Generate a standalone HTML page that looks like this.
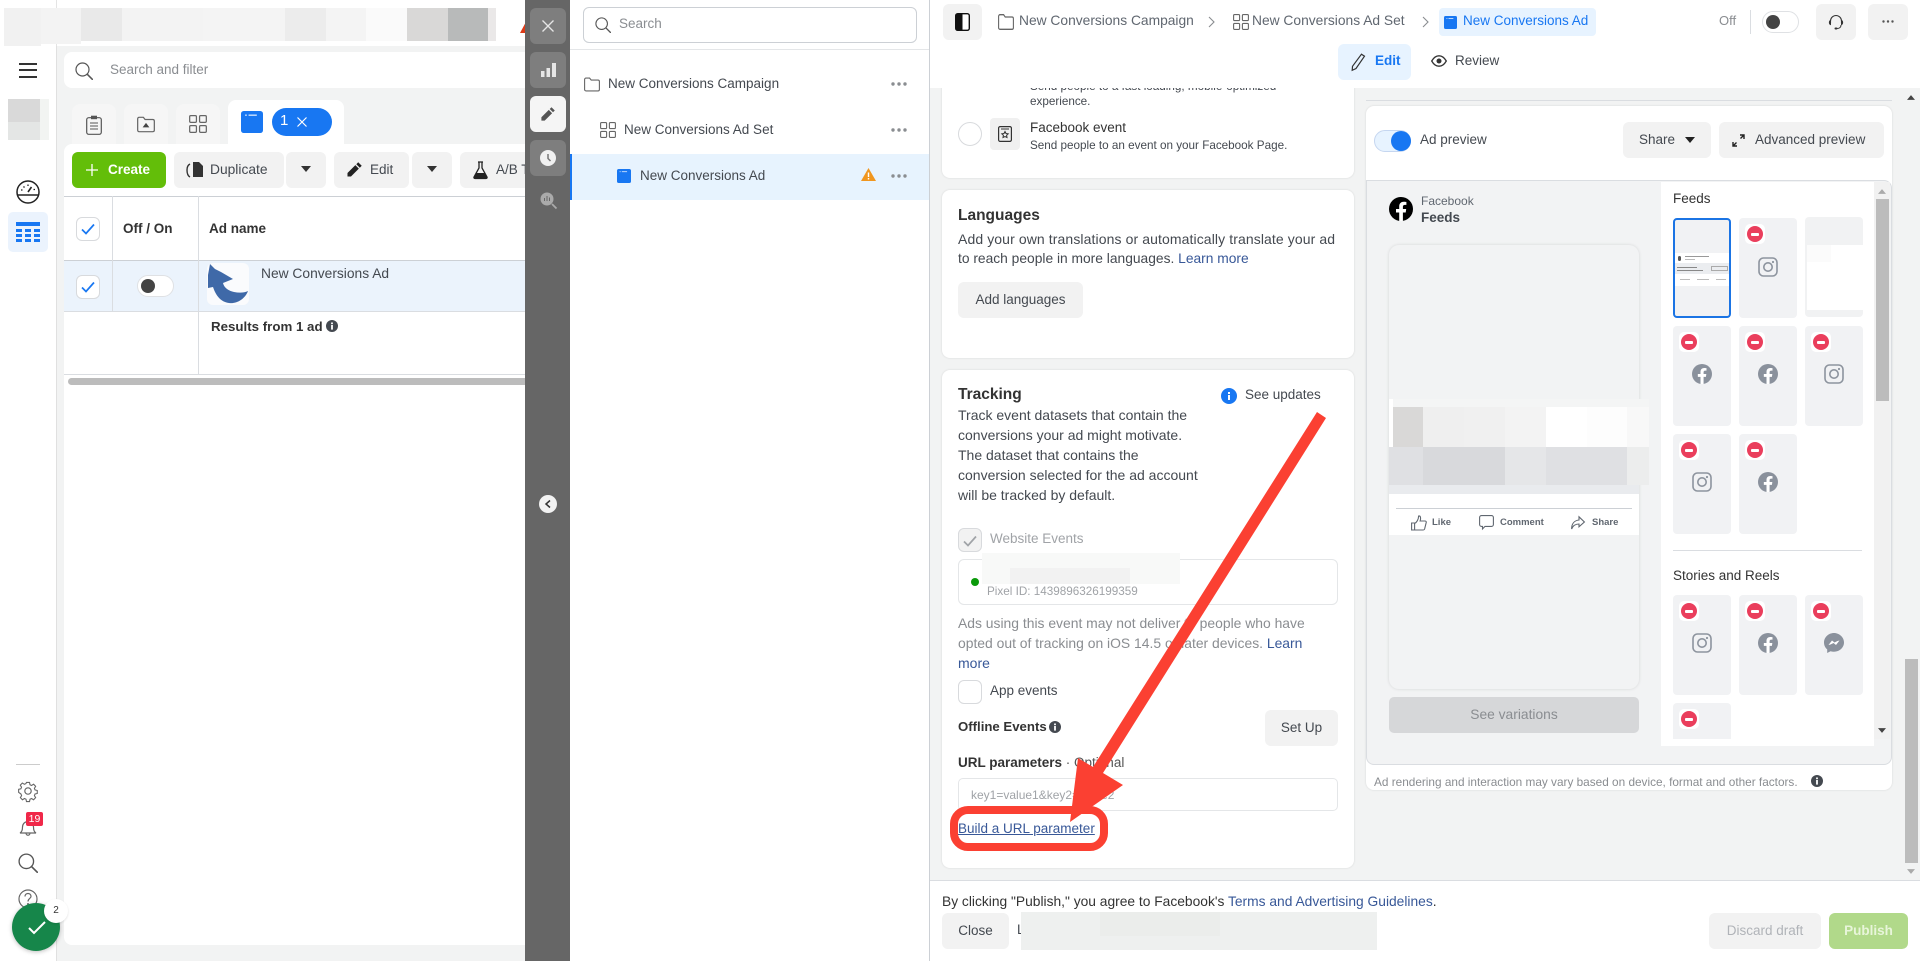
<!DOCTYPE html>
<html><head><meta charset="utf-8"><style>
*{box-sizing:border-box}
html,body{margin:0;padding:0;width:1920px;height:961px;overflow:hidden;background:#fff}
body{position:relative;font-family:"Liberation Sans",sans-serif;font-size:14px;color:#444950}
.a,.t{position:absolute}
.t{white-space:nowrap;line-height:20px;height:20px}
.b{font-weight:bold}
.btn{position:absolute;background:#f2f2f2;border-radius:6px}
.c{text-align:center}
svg{position:absolute;overflow:visible}
a{color:#385898;text-decoration:none}
.card{position:absolute;background:#fff;border-radius:8px;box-shadow:0 0 2px rgba(0,0,0,.12)}
.tile{position:absolute;width:58px;height:100px;background:#f1f2f4;border-radius:4px}
.st{position:absolute;left:6px;top:6px;width:20px;height:20px;background:#fff;border-radius:5px}
.st:after{content:"";position:absolute;left:2px;top:2px;width:16px;height:16px;border-radius:50%;background:#ea3e5c}
.st:before{content:"";position:absolute;z-index:1;left:6px;top:8.5px;width:8px;height:3px;background:#fff;border-radius:1px}
.chk{position:absolute;width:24px;height:24px;border:1px solid #d8dadd;border-radius:6px;background:#fff}
.tog{position:absolute;width:37px;height:22px;border:1px solid #dfe1e4;border-radius:11px;background:#fff}
.tog:after{content:"";position:absolute;left:3px;top:3px;width:14px;height:14px;border-radius:50%;background:#444}
.px{position:absolute}
.m{font-size:14px}
</style></head><body>
<svg width="0" height="0" style="position:absolute"><defs>
<symbol id="fb" viewBox="0 0 24 24"><circle cx="12" cy="12" r="12" fill="currentColor"/><path d="M16.7 15.5l.5-3.5h-3.3V9.8c0-1 .5-1.9 2-1.9h1.5V5s-1.4-.2-2.7-.2c-2.7 0-4.5 1.7-4.5 4.6V12H7v3.5h3.2V24h3.7v-8.5z" fill="#fff"/></symbol>
<symbol id="ig" viewBox="0 0 20 20"><g fill="none" stroke="#8d949e" stroke-width="1.6"><rect x="1" y="1" width="18" height="18" rx="4.5"/><circle cx="10" cy="10" r="4.2"/></g><circle cx="15" cy="5" r="1.1" fill="#8d949e"/></symbol>
<symbol id="ad" viewBox="0 0 16 16"><rect width="16" height="16" rx="2" fill="#1877f2"/><path d="M3 3h1.2M5.5 3h6" stroke="#cfe3fd" stroke-width="1"/></symbol>
<symbol id="grid" viewBox="0 0 16 16"><g fill="none" stroke="#666" stroke-width="1.1"><rect x=".6" y=".6" width="6" height="6" rx="1"/><rect x="9.4" y=".6" width="6" height="6" rx="1"/><rect x=".6" y="9.4" width="6" height="6" rx="1"/><rect x="9.4" y="9.4" width="6" height="6" rx="1"/></g></symbol>
<symbol id="folder" viewBox="0 0 16 14"><path d="M.6 12V2c0-.8.6-1.4 1.4-1.4h3.6l1.6 2H14c.8 0 1.4.6 1.4 1.4v8c0 .8-.6 1.4-1.400 1.400H2C1.200 13.400.6 12.800.6 12z" fill="none" stroke="#666" stroke-width="1.100"/></symbol>
<symbol id="mag" viewBox="0 0 18 18"><circle cx="7.500" cy="7.500" r="6.500" fill="none" stroke="#555" stroke-width="1.200"/><path d="M12.300 12.300l5 5" stroke="#555" stroke-width="1.500" stroke-linecap="round"/></symbol>
<symbol id="check" viewBox="0 0 14 12"><path d="M1 6.500l4 4 8-9" fill="none" stroke="#1877f2" stroke-width="1.700"/></symbol>
<symbol id="dots" viewBox="0 0 16 4"><circle cx="2" cy="2" r="1.700" fill="#8a8d91"/><circle cx="8" cy="2" r="1.700" fill="#8a8d91"/><circle cx="14" cy="2" r="1.700" fill="#8a8d91"/></symbol>
<symbol id="pen" viewBox="0 0 16 16"><path d="M11.500 1.200l3.300 3.300-1.800 1.800-3.300-3.300zM8.800 3.900l3.300 3.300-7.400 7.400H1.400v-3.300z" fill="currentColor"/></symbol>
<symbol id="info" viewBox="0 0 12 12"><circle cx="6" cy="6" r="6" fill="#444950"/><rect x="5.100" y="5" width="1.800" height="4.600" fill="#fff"/><rect x="5.100" y="2.500" width="1.800" height="1.700" fill="#fff"/></symbol>
<symbol id="tri" viewBox="0 0 10 6"><path d="M0 0h10L5 6z" fill="currentColor"/></symbol>
</defs></svg>

<!-- LEFT APP -->
<div class="a" style="left:56px;top:46px;width:474px;height:915px;background:#f2f3f3"></div>
<div class="a" style="left:56px;top:0;width:1px;height:46px;background:#e4e4e4"></div>
<div class="a" style="left:56px;top:46px;width:1px;height:915px;background:#e0e0e0"></div>

<!-- top blurred tiles -->
<div class="px" style="left:4px;top:8px;width:37px;height:38px;background:#f1f1f1"></div>
<div class="px" style="left:41px;top:8px;width:40px;height:36px;background:#f3f3f3"></div>
<div class="px" style="left:81px;top:8px;width:41px;height:33px;background:#e9e9e9"></div>
<div class="px" style="left:122px;top:8px;width:81px;height:33px;background:#f3f3f3"></div>
<div class="px" style="left:203px;top:8px;width:82px;height:33px;background:#f4f4f4"></div>
<div class="px" style="left:285px;top:8px;width:41px;height:33px;background:#ececec"></div>
<div class="px" style="left:326px;top:8px;width:40px;height:33px;background:#f4f4f4"></div>
<div class="px" style="left:366px;top:8px;width:41px;height:33px;background:#fafafa"></div>
<div class="px" style="left:407px;top:8px;width:41px;height:33px;background:#d9d8d7"></div>
<div class="px" style="left:448px;top:8px;width:40px;height:33px;background:#b8baba"></div>
<div class="px" style="left:488px;top:8px;width:8px;height:33px;background:#eae8e8"></div>
<svg style="left:520px;top:20px" width="10" height="14"><path d="M0 13L7 0h3v13z" fill="#dd3a17"/></svg>

<!-- sidebar -->
<div class="a" style="left:19px;top:63px;width:18px;height:2px;background:#333"></div>
<div class="a" style="left:19px;top:69px;width:18px;height:2px;background:#333"></div>
<div class="a" style="left:19px;top:76px;width:18px;height:2px;background:#333"></div>
<div class="px" style="left:8px;top:99px;width:32px;height:23px;background:#d9d9d9"></div>
<div class="px" style="left:8px;top:122px;width:32px;height:18px;background:#e4e6e5"></div>
<div class="px" style="left:40px;top:99px;width:9px;height:41px;background:#f2f4f2"></div>
<svg style="left:16px;top:180px" width="24" height="24" viewBox="0 0 24 24"><circle cx="12" cy="12" r="11" fill="none" stroke="#222" stroke-width="1.500"/><path d="M2 15h20" stroke="#222" stroke-width="1.500"/><path d="M12 12l3.500-5" stroke="#222" stroke-width="1.600"/><path d="M5 10h1.500M7.500 6.500l1 1M12 4.500v1.500M17.500 9.500H19" stroke="#222" stroke-width="1.300"/></svg>
<div class="a" style="left:8px;top:212px;width:40px;height:40px;background:#ebf3fd;border-radius:5px"></div>
<svg style="left:16px;top:222px" width="24" height="21" viewBox="0 0 24 21"><rect width="24" height="4" fill="#1877f2"/><path d="M0 7h6v3H0zM9 7h6v3H9zM18 7h6v3h-6zM0 12h6v3H0zM9 12h6v3H9zM18 12h6v3h-6zM0 17h6v3H0zM9 17h6v3H9zM18 17h6v3h-6z" fill="#1877f2"/></svg>
<div class="a" style="left:16px;top:764px;width:24px;height:1px;background:#ccc"></div>
<svg style="left:18px;top:781px" width="20" height="20" viewBox="0 0 20 20"><path d="M8.300 1h3.400l.5 2.600 1.700.8 2.300-1.400 2.300 2.400-1.400 2.200.7 1.800 2.500.6v3.300l-2.500.6-.7 1.800 1.400 2.200-2.300 2.400-2.300-1.400-1.700.8-.5 2.600H8.300l-.5-2.600-1.700-.8-2.300 1.400-2.300-2.400 1.400-2.200-.7-1.800L-.4 12V8.700l2.500-.6.7-1.800L1.400 4.100 3.700 1.700 6 3.100l1.700-.8z" transform="translate(1 .5) scale(.9)" fill="none" stroke="#666" stroke-width="1.200"/><circle cx="10" cy="10" r="3.200" fill="none" stroke="#666" stroke-width="1.200"/></svg>
<svg style="left:19px;top:819px" width="18" height="18" viewBox="0 0 18 18"><path d="M1 14c2-1 2.500-3 2.500-6a5.500 5.500 0 0 1 11 0c0 3 .5 5 2.500 6zM7 14c0 3 4 3 4 0" fill="none" stroke="#666" stroke-width="1.200"/></svg>
<div class="a c" style="left:26px;top:812px;width:17px;height:14px;background:#f02849;border-radius:2px;color:#fff;font-size:10.500px;line-height:14px">19</div>
<svg style="left:18px;top:853px" width="20" height="20"><use href="#mag" width="20" height="20"/></svg>
<svg style="left:18px;top:889px" width="20" height="20" viewBox="0 0 20 20"><circle cx="10" cy="10" r="9" fill="none" stroke="#666" stroke-width="1.200"/><path d="M7 7.500c0-4 6-4 6 0 0 2-3 2-3 5" fill="none" stroke="#666" stroke-width="1.200"/><circle cx="10" cy="15" r="1" fill="#666"/></svg>

<!-- search bar -->
<div class="a" style="left:64px;top:52px;width:480px;height:36px;background:#fff;border-radius:8px"></div>
<svg style="left:75px;top:62px" width="18" height="18"><use href="#mag" width="18" height="18"/></svg>
<div class="t" style="left:110px;top:60px;color:#8a8d91;font-size:13.500px">Search and filter</div>

<!-- tabs -->
<div class="a" style="left:72px;top:104px;width:44px;height:42px;background:#f6f6f6;border-radius:8px 8px 0 0"></div>
<div class="a" style="left:124px;top:104px;width:44px;height:42px;background:#f6f6f6;border-radius:8px 8px 0 0"></div>
<div class="a" style="left:176px;top:104px;width:44px;height:42px;background:#f6f6f6;border-radius:8px 8px 0 0"></div>
<svg style="left:86px;top:115px" width="16" height="20" viewBox="0 0 16 20"><rect x=".7" y="2.700" width="14.600" height="16.600" rx="2" fill="none" stroke="#555" stroke-width="1.200"/><rect x="5" y=".7" width="6" height="3.500" fill="#555"/><path d="M4 8h8M4 11h8M4 14h8" stroke="#555" stroke-width="1"/></svg>
<svg style="left:137px;top:116px" width="18" height="17" viewBox="0 0 16 14"><use href="#folder" width="16" height="14"/><path d="M8 5.500l3 4H5z" fill="#444"/></svg>
<svg style="left:189px;top:115px" width="18" height="18"><use href="#grid" width="18" height="18"/></svg>
<div class="a" style="left:228px;top:100px;width:116px;height:46px;background:#fff;border-radius:8px 8px 0 0"></div>
<svg style="left:241px;top:111px" width="22" height="22"><use href="#ad" width="22" height="22"/></svg>
<div class="a" style="left:272px;top:108px;width:60px;height:28px;background:#1877f2;border-radius:14px"></div>
<div class="t" style="left:280px;top:111px;color:#fff;font-size:15px">1</div>
<svg style="left:297px;top:117px" width="10" height="10"><path d="M.5.500l9 9M9.500.500l-9 9" stroke="#fff" stroke-width="1.200"/></svg>

<!-- panel -->
<div class="a" style="left:64px;top:144px;width:470px;height:801px;background:#fff;border-radius:8px"></div>
<div class="a" style="left:72px;top:152px;width:94px;height:36px;background:#63be09;border-radius:6px"></div>
<svg style="left:86px;top:164px" width="12" height="12"><path d="M6 0v12M0 6h12" stroke="#fff" stroke-width="1.300"/></svg>
<div class="t b" style="left:108px;top:160px;color:#fff;font-size:13.500px">Create</div>
<div class="btn" style="left:174px;top:152px;width:110px;height:36px"></div>
<div class="btn" style="left:286px;top:152px;width:40px;height:36px"></div>
<svg style="left:186px;top:161px" width="18" height="18" viewBox="0 0 18 18"><path d="M7 1h6l4 4v11H7z" fill="#333"/><path d="M4 3C2 4 1 6 1 9s1 6 3 7" fill="none" stroke="#333" stroke-width="1.400"/></svg>
<div class="t" style="left:210px;top:160px;font-size:13.800px">Duplicate</div>
<svg style="left:301px;top:166px" width="10" height="6" color="#333"><use href="#tri" width="10" height="6"/></svg>
<div class="btn" style="left:334px;top:152px;width:75px;height:36px"></div>
<div class="btn" style="left:412px;top:152px;width:40px;height:36px"></div>
<svg style="left:346px;top:161px;color:#222" width="17" height="17"><use href="#pen" width="17" height="17"/></svg>
<div class="t" style="left:370px;top:160px;font-size:13.500px">Edit</div>
<svg style="left:427px;top:166px" width="10" height="6" color="#333"><use href="#tri" width="10" height="6"/></svg>
<div class="btn" style="left:460px;top:152px;width:90px;height:36px"></div>
<svg style="left:473px;top:161px" width="15" height="18" viewBox="0 0 15 18"><path d="M5 1h5M6 1v6L1 16c-.3.600 0 1.500 1 1.500h11c1 0 1.300-.9 1-1.500L9 7V1" fill="none" stroke="#222" stroke-width="1.300"/><path d="M3 12h9l2 5H1z" fill="#222"/></svg>
<div class="t" style="left:496px;top:160px;font-size:13.500px">A/B Test</div>

<!-- table -->
<div class="a" style="left:64px;top:196px;width:470px;height:1px;background:#ccd0d5"></div>
<div class="a" style="left:64px;top:260px;width:470px;height:52px;background:#ebf3fc;border-top:1px solid #ccd0d5;border-bottom:1px solid #dadde1"></div>
<div class="a" style="left:112px;top:196px;width:1px;height:115px;background:#dadde1"></div>
<div class="a" style="left:198px;top:196px;width:1px;height:178px;background:#dadde1"></div>
<div class="a" style="left:64px;top:374px;width:470px;height:1px;background:#dadde1"></div>
<div class="a" style="left:68px;top:378px;width:460px;height:7px;background:#bcbcbc;border-radius:4px"></div>
<div class="chk" style="left:76px;top:217px"></div><svg style="left:81px;top:223px" width="14" height="12"><use href="#check" width="14" height="12"/></svg>
<div class="chk" style="left:76px;top:275px"></div><svg style="left:81px;top:281px" width="14" height="12"><use href="#check" width="14" height="12"/></svg>
<div class="t b" style="left:123px;top:219px;font-size:13.500px;color:#333">Off / On</div>
<div class="t b" style="left:209px;top:219px;font-size:13.500px;color:#333">Ad name</div>
<div class="tog" style="left:137px;top:275px"></div>
<div class="a" style="left:207px;top:263px;width:42px;height:42px;background:#fafbfd;border-radius:6px"></div>
<svg style="left:207px;top:263px" width="42" height="42" viewBox="0 0 42 42"><path d="M3 1L8 6L14 9L26 16L16 20C17 25 22 28 27 29C32 30 37 30 41 28C38 36 30 41 22 40C14 39 9 33 6 24L1 25L1 12Z" fill="#3f69a8"/></svg>
<div class="t" style="left:261px;top:264px;font-size:13.800px">New Conversions Ad</div>
<div class="t b" style="left:211px;top:317px;font-size:13.300px;color:#333">Results from 1 ad</div>
<svg style="left:326px;top:320px" width="12" height="12"><use href="#info" width="12" height="12"/></svg>

<!-- fab -->
<div class="a" style="left:12px;top:903px;width:48px;height:48px;border-radius:50%;background:#16864a;box-shadow:0 1px 4px rgba(0,0,0,.25)"></div>
<svg style="left:28px;top:921px" width="18" height="14"><path d="M1 7l5 5L17 1" fill="none" stroke="#fff" stroke-width="2"/></svg>
<div class="a c" style="left:44px;top:899px;width:24px;height:24px;border-radius:50%;background:#fff;font-size:10px;line-height:24px;color:#333;box-shadow:0 1px 2px rgba(0,0,0,.12)">2</div>

<!-- RAIL -->
<div class="a" style="left:525px;top:0;width:45px;height:961px;background:#666"></div>
<div class="a" style="left:530px;top:8px;width:36px;height:36px;background:#7e7e7e;border-radius:6px"></div>
<svg style="left:542px;top:20px" width="12" height="12"><path d="M.5.500l11 11M11.500.500l-11 11" stroke="#e6e6e6" stroke-width="1.300"/></svg>
<div class="a" style="left:530px;top:52px;width:36px;height:36px;background:#7e7e7e;border-radius:6px"></div>
<svg style="left:541px;top:62px" width="15" height="15"><path d="M0 9h3.500v6H0zM5.500 6H9v9H5.500zM11 1h4v14h-4z" fill="#e6e6e6"/></svg>
<div class="a" style="left:530px;top:96px;width:36px;height:36px;background:#f5f5f5;border-radius:6px"></div>
<svg style="left:540px;top:106px;color:#555" width="16" height="16"><use href="#pen" width="16" height="16"/></svg>
<div class="a" style="left:530px;top:140px;width:36px;height:36px;background:#7e7e7e;border-radius:6px"></div>
<svg style="left:540px;top:150px" width="16" height="16"><circle cx="8" cy="8" r="8" fill="#f0f0f0"/><path d="M8 4v4.500l2.500 2.500" fill="none" stroke="#777" stroke-width="1.500"/></svg>
<svg style="left:540px;top:192px" width="17" height="17" viewBox="0 0 17 17"><circle cx="7" cy="7" r="6.500" fill="#aaa"/><path d="M4.500 6v3M7 4v5M9.500 5.500V9" stroke="#666" stroke-width="1"/><path d="M12 12l4.500 4.500" stroke="#aaa" stroke-width="1.800"/></svg>
<div class="a" style="left:539px;top:495px;width:18px;height:18px;background:#f2f2f2;border-radius:50%"></div>
<svg style="left:545px;top:500px" width="6" height="8"><path d="M5 .500L1 4l4 3.500" fill="none" stroke="#333" stroke-width="1.500"/></svg>

<!-- NAV PANEL -->
<div class="a" style="left:570px;top:0;width:360px;height:961px;background:#fff;border-right:1px solid #ccd0d5"></div>
<div class="a" style="left:583px;top:7px;width:334px;height:36px;border:1px solid #ccd0d5;border-radius:6px;background:#fff"></div>
<svg style="left:595px;top:17px" width="16" height="16"><use href="#mag" width="16" height="16"/></svg>
<div class="t" style="left:619px;top:14px;color:#8a8d91;font-size:13.500px">Search</div>
<div class="a" style="left:570px;top:49px;width:359px;height:1px;background:#e4e6e8"></div>
<svg style="left:584px;top:77px" width="16" height="15"><use href="#folder" width="16" height="15"/></svg>
<div class="t" style="left:608px;top:74px;font-size:13.500px">New Conversions Campaign</div>
<svg style="left:891px;top:82px" width="16" height="4"><use href="#dots" width="16" height="4"/></svg>
<svg style="left:600px;top:122px" width="16" height="16"><use href="#grid" width="16" height="16"/></svg>
<div class="t" style="left:624px;top:120px;font-size:13.500px">New Conversions Ad Set</div>
<svg style="left:891px;top:128px" width="16" height="4"><use href="#dots" width="16" height="4"/></svg>
<div class="a" style="left:570px;top:154px;width:359px;height:46px;background:#e7f3fe;border-left:2px solid #1877f2"></div>
<svg style="left:617px;top:169px" width="14" height="14"><use href="#ad" width="14" height="14"/></svg>
<div class="t" style="left:640px;top:166px;font-size:13.500px">New Conversions Ad</div>
<svg style="left:861px;top:168px" width="15" height="13" viewBox="0 0 15 13"><path d="M7.500 0L15 13H0z" fill="#f0961f"/><rect x="6.800" y="4.500" width="1.400" height="4.500" fill="#fff"/><rect x="6.800" y="10" width="1.400" height="1.500" fill="#fff"/></svg>
<svg style="left:891px;top:174px" width="16" height="4"><use href="#dots" width="16" height="4"/></svg>

<!-- EDITOR -->
<div class="a" style="left:930px;top:88px;width:990px;height:792px;background:#f2f3f3"></div>

<!-- card 1 -->
<div class="card" style="left:942px;top:60px;width:412px;height:118px"></div>
<div class="t" style="left:1030px;top:77px;font-size:11.700px">Send people to a fast loading, mobile-optimized</div>
<div class="t" style="left:1030px;top:92px;font-size:11.700px">experience.</div>
<div class="a" style="left:958px;top:122px;width:24px;height:24px;border:1px solid #d8dadd;border-radius:50%;background:#fff"></div>
<div class="a" style="left:990px;top:118px;width:30px;height:32px;background:#f0f0f0;border-radius:4px"></div>
<svg style="left:998px;top:126px" width="14" height="16" viewBox="0 0 14 16"><rect x=".6" y=".6" width="12.800" height="14.800" rx="1.500" fill="none" stroke="#333" stroke-width="1.200"/><path d="M3 3h8" stroke="#333"/><path d="M7 5.500l1 2 2.200.3-1.600 1.500.4 2.200-2-1-2 1 .4-2.200-1.600-1.500 2.200-.3z" fill="none" stroke="#333"/></svg>
<div class="t" style="left:1030px;top:118px;font-size:13.500px;color:#333">Facebook event</div>
<div class="t" style="left:1030px;top:136px;font-size:11.700px">Send people to an event on your Facebook Page.</div>

<!-- languages -->
<div class="card" style="left:942px;top:190px;width:412px;height:168px"></div>
<div class="t b" style="left:958px;top:206px;font-size:15.500px;color:#333">Languages</div>
<div class="t" style="left:958px;top:229px;font-size:14px;letter-spacing:.1px">Add your own translations or automatically translate your ad</div>
<div class="t" style="left:958px;top:249px;font-size:13.800px">to reach people in more languages. <a>Learn more</a></div>
<div class="btn" style="left:958px;top:282px;width:125px;height:36px"></div>
<div class="t c" style="left:958px;top:290px;width:125px;font-size:13.500px">Add languages</div>

<!-- tracking -->
<div class="card" style="left:942px;top:370px;width:412px;height:498px"></div>
<div class="t b" style="left:958px;top:385px;font-size:15.500px;color:#333">Tracking</div>
<svg style="left:1221px;top:388px" width="16" height="16"><circle cx="8" cy="8" r="8" fill="#1877f2"/><rect x="7" y="7" width="2" height="5" fill="#fff"/><rect x="7" y="4" width="2" height="2" fill="#fff"/></svg>
<div class="t" style="left:1245px;top:385px;font-size:13.500px">See updates</div>
<div class="t m" style="left:958px;top:405px">Track event datasets that contain the</div>
<div class="t m" style="left:958px;top:425px">conversions your ad might motivate.</div>
<div class="t m" style="left:958px;top:445px">The dataset that contains the</div>
<div class="t m" style="left:958px;top:465px">conversion selected for the ad account</div>
<div class="t m" style="left:958px;top:485px">will be tracked by default.</div>
<div class="chk" style="left:958px;top:528px;background:#f2f2f2"></div>
<svg style="left:963px;top:535px" width="14" height="12" viewBox="0 0 14 12"><path d="M1 6.500l4 4 8-9" fill="none" stroke="#a0a3a7" stroke-width="1.700"/></svg>
<div class="t" style="left:990px;top:529px;font-size:13.500px;color:#a0a3a7">Website Events</div>
<div class="a" style="left:958px;top:559px;width:380px;height:46px;border:1px solid #e4e6e8;border-radius:6px;background:#fff"></div>
<div class="px" style="left:982px;top:553px;width:198px;height:31px;background:#f8f9f8"></div>
<div class="px" style="left:1010px;top:568px;width:120px;height:16px;background:#f2f2f2"></div>
<div class="a" style="left:971px;top:578px;width:8px;height:8px;border-radius:50%;background:#0a9a0a"></div>
<div class="t" style="left:987px;top:582px;font-size:11.700px;color:#a0a3a7">Pixel ID: 1439896326199359</div>
<div class="t" style="left:958px;top:613px;font-size:13.900px;color:#8a8d91">Ads using this event may not deliver to people who have</div>
<div class="t" style="left:958px;top:633px;font-size:13.900px;color:#8a8d91">opted out of tracking on iOS 14.5 or later devices. <a>Learn</a></div>
<div class="t m" style="left:958px;top:653px"><a>more</a></div>
<div class="chk" style="left:958px;top:680px"></div>
<div class="t" style="left:990px;top:681px;font-size:13.500px">App events</div>
<div class="t b" style="left:958px;top:717px;font-size:13.200px;color:#333">Offline Events</div>
<svg style="left:1049px;top:721px" width="12" height="12"><use href="#info" width="12" height="12"/></svg>
<div class="btn" style="left:1265px;top:710px;width:73px;height:36px"></div>
<div class="t c" style="left:1265px;top:718px;width:73px;font-size:13.500px">Set Up</div>
<div class="t b" style="left:958px;top:753px;font-size:13.500px;color:#333">URL parameters <span style="font-weight:normal;color:#555">· Optional</span></div>
<div class="a" style="left:958px;top:778px;width:380px;height:33px;border:1px solid #e4e6e8;border-radius:5px;background:#fff"></div>
<div class="t" style="left:971px;top:785px;font-size:12px;color:#a0a3a7">key1=value1&amp;key2=value2</div>
<div class="t" style="left:958px;top:819px;font-size:13.500px"><a style="text-decoration:underline">Build a URL parameter</a></div>

<!-- right column -->
<div class="a" style="left:1366px;top:100px;width:526px;height:1px;background:#dadde1"></div>
<div class="card" style="left:1366px;top:106px;width:526px;height:684px"></div>
<div class="a" style="left:1374px;top:130px;width:37px;height:22px;border:1px solid #c5d6f0;border-radius:11px;background:#e7f3ff"></div>
<div class="a" style="left:1391px;top:131px;width:20px;height:20px;border-radius:50%;background:#1877f2"></div>
<div class="t" style="left:1420px;top:130px;font-size:13.500px">Ad preview</div>
<div class="btn" style="left:1623px;top:122px;width:88px;height:36px"></div>
<div class="t" style="left:1639px;top:130px;font-size:13.500px">Share</div>
<svg style="left:1685px;top:137px" width="10" height="6" color="#222"><use href="#tri" width="10" height="6"/></svg>
<div class="btn" style="left:1719px;top:122px;width:165px;height:36px"></div>
<svg style="left:1732px;top:134px" width="13" height="13"><path d="M8 1h4v4M12 1L8.500 4.500M5 12H1V8M1 12l3.500-3.500" fill="none" stroke="#222" stroke-width="1.400"/></svg>
<div class="t" style="left:1755px;top:130px;font-size:13.500px">Advanced preview</div>

<!-- preview box -->
<div class="a" style="left:1366px;top:180px;width:526px;height:585px;background:#f2f3f4;border:1px solid #dadde1;border-radius:0 8px 8px 8px"></div>
<svg style="left:1389px;top:197px;color:#000" width="24" height="24"><use href="#fb" width="24" height="24"/></svg>
<div class="t" style="left:1421px;top:191px;font-size:12px;color:#606770">Facebook</div>
<div class="t b" style="left:1421px;top:208px;font-size:13.500px">Feeds</div>
<div class="a" style="left:1389px;top:245px;width:250px;height:444px;background:#f2f3f4;border-radius:10px;box-shadow:0 0 3px rgba(0,0,0,.12)"></div>
<div class="px" style="left:1389px;top:399px;width:260px;height:8px;background:#f4f5f5"></div>
<div class="px" style="left:1389px;top:399px;width:4px;height:48px;background:#fff"></div>
<div class="px" style="left:1393px;top:407px;width:30px;height:40px;background:#d9d8d7"></div>
<div class="px" style="left:1423px;top:407px;width:41px;height:40px;background:#efefef"></div>
<div class="px" style="left:1464px;top:407px;width:41px;height:40px;background:#f0f0f0"></div>
<div class="px" style="left:1505px;top:407px;width:41px;height:40px;background:#f3f3f3"></div>
<div class="px" style="left:1546px;top:407px;width:41px;height:40px;background:#fff"></div>
<div class="px" style="left:1587px;top:407px;width:40px;height:40px;background:#fdfdfd"></div>
<div class="px" style="left:1627px;top:407px;width:22px;height:40px;background:#f8f8f8"></div>
<div class="px" style="left:1389px;top:447px;width:34px;height:38px;background:#dfe0e3"></div>
<div class="px" style="left:1423px;top:447px;width:82px;height:38px;background:#d8d9dc"></div>
<div class="px" style="left:1505px;top:447px;width:41px;height:38px;background:#e5e6e8"></div>
<div class="px" style="left:1546px;top:447px;width:81px;height:38px;background:#dfe0e3"></div>
<div class="px" style="left:1627px;top:447px;width:22px;height:38px;background:#eceded"></div>
<div class="px" style="left:1389px;top:485px;width:250px;height:9px;background:#e9ebee"></div>
<div class="px" style="left:1389px;top:494px;width:250px;height:41px;background:#fff"></div>
<div class="a" style="left:1396px;top:508px;width:236px;height:1px;background:#ccd0d5"></div>
<svg style="left:1411px;top:515px" width="16" height="16" viewBox="0 0 16 16"><path d="M.6 8h3v7h-3zM3.600 8.500c2-1 4-4 4-7.500 2-.5 2.500 2 1.500 5h5c1 0 1.500 1 1 2l-1.500 6c-.2.600-.7 1-1.300 1H3.600" fill="none" stroke="#606770" stroke-width="1.100"/></svg>
<div class="t b" style="left:1432px;top:513px;font-size:9.500px;color:#606770">Like</div>
<svg style="left:1479px;top:515px" width="15" height="15" viewBox="0 0 15 15"><path d="M2.500.600h10c1 0 1.900.9 1.900 1.900v7c0 1-.9 1.900-1.900 1.900H6l-2.500 2.500V11.400h-1c-1 0-1.900-.9-1.900-1.900v-7C.6 1.500 1.500.600 2.500.600z" fill="none" stroke="#606770" stroke-width="1.100"/></svg>
<div class="t b" style="left:1500px;top:513px;font-size:9.500px;color:#606770">Comment</div>
<svg style="left:1571px;top:516px" width="14" height="14" viewBox="0 0 14 14"><path d="M8 .800L13.400 6 8 10.800V8C4.500 8 2 9.500.6 13c0-5 2.500-8.500 7.400-9z" fill="none" stroke="#606770" stroke-width="1.100"/></svg>
<div class="t b" style="left:1592px;top:513px;font-size:9.500px;color:#606770">Share</div>
<div class="a c" style="left:1389px;top:697px;width:250px;height:36px;background:#d6d7d9;border-radius:5px;color:#8a8d91;font-size:13.800px;line-height:35px">See variations</div>

<div class="a" style="left:1661px;top:182px;width:213px;height:564px;background:#fff"></div>
<div class="a" style="left:1874px;top:182px;width:16px;height:557px;background:#f1f1f1"></div>
<div class="a" style="left:1876px;top:199px;width:13px;height:202px;background:#bcbcbc"></div>
<svg style="left:1878px;top:189px" width="8" height="5" viewBox="0 0 10 6"><path d="M0 6h10L5 0z" fill="#aaa"/></svg>
<svg style="left:1878px;top:728px" width="8" height="5" color="#444"><use href="#tri" width="8" height="5"/></svg>
<div class="t" style="left:1673px;top:189px;font-size:13.500px;color:#333">Feeds</div>

<div class="tile" style="left:1673px;top:218px;border:2px solid #1b74e4;background:#f1f2f4"></div>
<div class="a" style="left:1675px;top:253px;width:54px;height:33px;background:#fff"></div>
<div class="a" style="left:1675px;top:263px;width:54px;height:11px;background:#ebedf0"></div>
<div class="a" style="left:1678px;top:256px;width:3px;height:5px;background:#555;border-radius:2px"></div>
<div class="a" style="left:1685px;top:256px;width:24px;height:1px;background:#999"></div>
<div class="a" style="left:1685px;top:259px;width:10px;height:1px;background:#bbb"></div>
<div class="a" style="left:1677px;top:267px;width:20px;height:1px;background:#888"></div>
<div class="a" style="left:1677px;top:270px;width:26px;height:1px;background:#888"></div>
<div class="a" style="left:1711px;top:266px;width:17px;height:5px;border:1px solid #aaa"></div>
<div class="a" style="left:1680px;top:279px;width:10px;height:1px;background:#bbb"></div>
<div class="a" style="left:1697px;top:279px;width:12px;height:1px;background:#bbb"></div>
<div class="a" style="left:1716px;top:279px;width:10px;height:1px;background:#bbb"></div>

<div class="tile" style="left:1739px;top:218px"><div class="st"></div><svg style="left:19px;top:39px" width="20" height="20"><use href="#ig" width="20" height="20"/></svg></div>
<div class="tile" style="left:1805px;top:217px;background:#f1f2f3;height:100px"></div>
<div class="px" style="left:1807px;top:245px;width:56px;height:65px;background:#fff"></div>
<div class="px" style="left:1807px;top:245px;width:24px;height:17px;background:#fbfbfb"></div>

<div class="tile" style="left:1673px;top:326px"><div class="st"></div><svg style="left:19px;top:38px;color:#8a919c" width="20" height="20"><use href="#fb" width="20" height="20"/></svg></div>
<div class="tile" style="left:1739px;top:326px"><div class="st"></div><svg style="left:19px;top:38px;color:#8a919c" width="20" height="20"><use href="#fb" width="20" height="20"/></svg></div>
<div class="tile" style="left:1805px;top:326px"><div class="st"></div><svg style="left:19px;top:38px" width="20" height="20"><use href="#ig" width="20" height="20"/></svg></div>
<div class="tile" style="left:1673px;top:434px"><div class="st"></div><svg style="left:19px;top:38px" width="20" height="20"><use href="#ig" width="20" height="20"/></svg></div>
<div class="tile" style="left:1739px;top:434px"><div class="st"></div><svg style="left:19px;top:38px;color:#8a919c" width="20" height="20"><use href="#fb" width="20" height="20"/></svg></div>
<div class="a" style="left:1673px;top:550px;width:189px;height:1px;background:#dadde1"></div>
<div class="t" style="left:1673px;top:566px;font-size:13.500px;color:#333">Stories and Reels</div>
<div class="tile" style="left:1673px;top:595px"><div class="st"></div><svg style="left:19px;top:38px" width="20" height="20"><use href="#ig" width="20" height="20"/></svg></div>
<div class="tile" style="left:1739px;top:595px"><div class="st"></div><svg style="left:19px;top:38px;color:#8a919c" width="20" height="20"><use href="#fb" width="20" height="20"/></svg></div>
<div class="tile" style="left:1805px;top:595px"><div class="st"></div><svg style="left:19px;top:38px" width="20" height="20" viewBox="0 0 20 20"><path d="M10 0C4.500 0 0 4.200 0 9.500c0 2.800 1.200 5.200 3.200 6.900V20l3.300-1.800c1.100.3 2.300.5 3.500.5 5.500 0 10-4.200 10-9.200S15.500 0 10 0z" fill="#8a919c"/><path d="M4.500 12l3.500-4.500 2.500 2 3-1.500 2-.5-3.500 4.500-2.500-2-3 1.500z" fill="#fff"/></svg></div>
<div class="a" style="left:1673px;top:703px;width:58px;height:36px;background:#f1f2f4;border-radius:4px 4px 0 0"><div class="st"></div></div>

<div class="t" style="left:1374px;top:772px;font-size:11.800px;color:#8a8d91">Ad rendering and interaction may vary based on device, format and other factors.</div>
<svg style="left:1811px;top:775px" width="12" height="12"><use href="#info" width="12" height="12"/></svg>

<!-- main scrollbar -->
<div class="a" style="left:1905px;top:659px;width:13px;height:204px;background:#bcbcbc"></div>
<svg style="left:1907px;top:95px" width="8" height="5" viewBox="0 0 10 6"><path d="M0 6h10L5 0z" fill="#444"/></svg>
<svg style="left:1907px;top:869px" width="8" height="5" color="#aaa"><use href="#tri" width="8" height="5"/></svg>

<!-- footer -->
<div class="a" style="left:930px;top:880px;width:990px;height:81px;background:#fff;border-top:1px solid #dadde1"></div>
<div class="t" style="left:942px;top:892px;font-size:13.800px;color:#333">By clicking "Publish," you agree to Facebook's <a>Terms and Advertising Guidelines</a>.</div>
<div class="btn" style="left:942px;top:913px;width:67px;height:36px"></div>
<div class="t c" style="left:942px;top:921px;width:67px;font-size:13.500px">Close</div>
<div class="t" style="left:1017px;top:920px;font-size:13.500px">L</div>
<div class="px" style="left:1021px;top:912px;width:356px;height:38px;background:#eef0ef"></div>
<div class="px" style="left:1100px;top:912px;width:120px;height:24px;background:#ebedeb"></div>
<div class="btn" style="left:1709px;top:913px;width:112px;height:36px;background:#f2f2f2"></div>
<div class="t c" style="left:1709px;top:921px;width:112px;font-size:13.500px;color:#b0b3b8">Discard draft</div>
<div class="btn" style="left:1829px;top:913px;width:79px;height:36px;background:#b1d98a"></div>
<div class="t c b" style="left:1829px;top:921px;width:79px;font-size:13.500px;color:#e8f5da">Publish</div>

<!-- HEADER -->
<div class="a" style="left:930px;top:0;width:990px;height:88px;background:#fff"></div>
<div class="btn" style="left:943px;top:4px;width:39px;height:36px"></div>
<svg style="left:955px;top:13px" width="15" height="18" viewBox="0 0 15 18"><rect x=".7" y=".7" width="13.600" height="16.600" rx="2" fill="#fff" stroke="#111" stroke-width="1.400"/><rect x="1" y="1" width="6.500" height="16" fill="#111"/></svg>
<svg style="left:998px;top:14px" width="16" height="16" viewBox="0 0 16 14" preserveAspectRatio="none"><use href="#folder" width="16" height="14"/></svg>
<div class="t" style="left:1019px;top:11px;font-size:13.800px;color:#606770">New Conversions Campaign</div>
<svg style="left:1208px;top:16px" width="7" height="12"><path d="M1 1l5 5-5 5" fill="none" stroke="#8a8d91" stroke-width="1.100"/></svg>
<svg style="left:1233px;top:14px" width="16" height="16"><use href="#grid" width="16" height="16"/></svg>
<div class="t" style="left:1252px;top:11px;font-size:13.800px;color:#606770">New Conversions Ad Set</div>
<svg style="left:1422px;top:16px" width="7" height="12"><path d="M1 1l5 5-5 5" fill="none" stroke="#8a8d91" stroke-width="1.100"/></svg>
<div class="a" style="left:1439px;top:8px;width:157px;height:28px;background:#e7f3ff;border-radius:4px"></div>
<svg style="left:1444px;top:15px" width="13" height="15"><use href="#ad" width="13" height="15"/></svg>
<div class="t" style="left:1463px;top:11px;font-size:13.500px;color:#1877f2">New Conversions Ad</div>
<div class="t" style="left:1719px;top:11px;font-size:13px;color:#8a8d91">Off</div>
<div class="a" style="left:1750px;top:10px;width:1px;height:24px;background:#dadde1"></div>
<div class="tog" style="left:1762px;top:11px"></div>
<div class="btn" style="left:1816px;top:4px;width:40px;height:36px"></div>
<svg style="left:1828px;top:14px" width="16" height="16" viewBox="0 0 16 16"><path d="M2.500 9V7a5.500 5.500 0 0 1 11 0v2" fill="none" stroke="#333" stroke-width="1.100"/><path d="M2.500 6.500C1 7 1 10 2.500 10.500zM13.500 6.500c1.500.5 1.500 3.500 0 4z" fill="#333" stroke="#333"/><path d="M13 11c0 2.500-2 3.500-4 3.500" fill="none" stroke="#333"/><rect x="6.500" y="13.500" width="3" height="2" rx="1" fill="#333"/></svg>
<div class="btn" style="left:1868px;top:4px;width:40px;height:36px"></div>
<svg style="left:1882px;top:20px" width="12" height="3" viewBox="0 0 16 4"><circle cx="2" cy="2" r="1.600" fill="#555"/><circle cx="8" cy="2" r="1.600" fill="#555"/><circle cx="14" cy="2" r="1.600" fill="#555"/></svg>
<div class="a" style="left:1338px;top:44px;width:73px;height:36px;background:#e7f3ff;border-radius:6px"></div>
<svg style="left:1350px;top:53px" width="16" height="18" viewBox="0 0 16 18"><path d="M11.500 1.200l3 2-8.500 12.300-3.800 1.800.3-4z" fill="none" stroke="#333" stroke-width="1.200"/></svg>
<div class="t b" style="left:1375px;top:51px;font-size:13.500px;color:#1877f2">Edit</div>
<svg style="left:1431px;top:55px" width="16" height="12" viewBox="0 0 16 12"><path d="M.7 6C3 2 5.500.8 8 .8S13 2 15.300 6C13 10 10.500 11.200 8 11.200S3 10 .7 6z" fill="none" stroke="#333" stroke-width="1.300"/><circle cx="8" cy="6" r="2.500" fill="#333"/></svg>
<div class="t" style="left:1455px;top:51px;font-size:13.500px">Review</div>

<!-- ANNOTATION -->
<svg style="left:0;top:0" width="1920" height="961">
<rect x="954" y="810" width="150" height="37" rx="14" fill="none" stroke="#fb4032" stroke-width="8"/>
<path d="M1317 412L1326 418L1103 773L1123 785L1070 822L1078 758L1093 767Z" fill="#fb4032"/>
</svg>
</body></html>
